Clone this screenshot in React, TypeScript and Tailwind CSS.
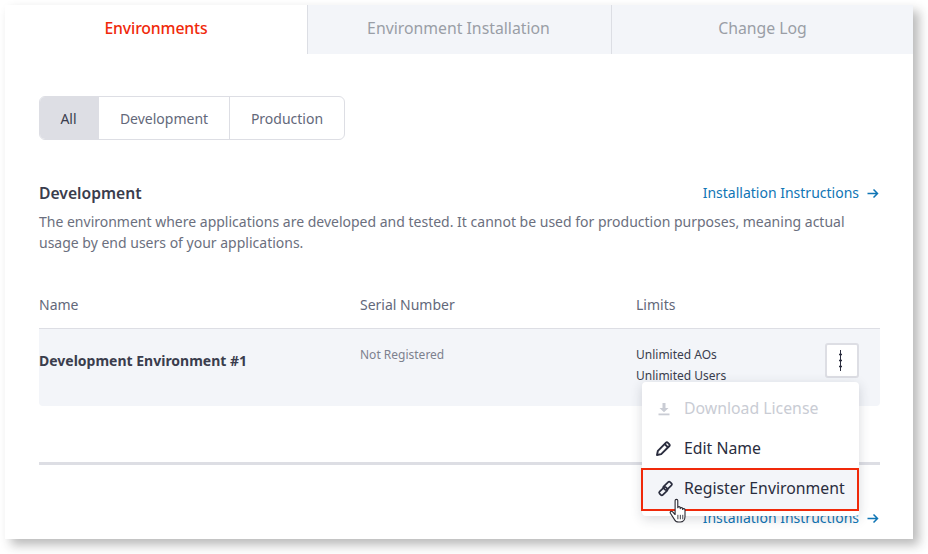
const font = { fontFamily: '"Noto Sans", sans-serif' };

function ArrowIcon() {
  return (
    <svg width="12" height="11" viewBox="0 0 12 11" fill="none" stroke="#0f75b5" strokeWidth="1.5">
      <path d="M0.5 5.5H10.5M6.5 1.5L10.5 5.5L6.5 9.5" />
    </svg>
  );
}

function InstallLink() {
  return (
    <a className="flex items-center gap-[8px] pr-px text-[14px] leading-[20px] text-[#0f75b5]">
      Installation Instructions
      <ArrowIcon />
    </a>
  );
}

function DownloadIcon() {
  return (
    <svg width="14" height="14" viewBox="0 0 14 14" fill="#c9ccd4" className="ml-[15px] mr-[13px]">
      <path d="M5.5 1h3v5h3L7 10.2 2.5 6h3z" />
      <rect x="1.5" y="11.5" width="11" height="1.8" />
    </svg>
  );
}

function EditIcon() {
  return (
    <svg width="17" height="17" viewBox="0 0 17 17" fill="none" stroke="#2a2d3e" strokeWidth="1.9" strokeLinejoin="round" className="ml-[13px] mr-[12px]">
      <path d="M2 15l.9-4.2L11 2.6a1.2 1.2 0 0 1 1.7 0l1.7 1.7a1.2 1.2 0 0 1 0 1.7L6.2 14.1z" />
      <path d="M9.6 4l3.4 3.4" />
    </svg>
  );
}

function ChainIcon() {
  return (
    <svg width="17" height="17" viewBox="0 0 17 17" fill="none" stroke="#2a2d3e" strokeWidth="1.7" className="ml-[14px] mr-[10px]">
      <rect x="6.1" y="3.6" width="9" height="4.6" rx="1.4" transform="rotate(-45 10.6 5.9)" />
      <rect x="1.9" y="8.8" width="9" height="4.6" rx="1.4" transform="rotate(-45 6.4 11.1)" />
    </svg>
  );
}

function HandCursor() {
  return (
    <svg width="20" height="27" viewBox="0 0 18 24" className="absolute left-[26px] top-[28px]">
      <path
        d="M5.5 2.2c0-1.5 2.4-1.5 2.4 0v6.4c0-1.3 2.2-1.3 2.2 0v.8c0-1.2 2.2-1.2 2.2 0v.8c0-1.1 2.1-1.1 2.1.2v6.2c0 2.6-1.6 4.9-4.2 4.9H8.6c-1.9 0-3-1-3.9-2.6L1.3 13.6c-.8-1.4.9-2.5 2-1.3l2.2 2.4z"
        fill="#fff"
        stroke="#2a2a33"
        strokeWidth="1"
        strokeLinejoin="round"
      />
      <path d="M8 15v4M10.2 15v4M12.4 15v4" stroke="#2a2a33" strokeWidth="0.8" />
    </svg>
  );
}

function RowMenu() {
  return (
    <div className="absolute left-[603px] top-[53px] h-[134px] w-[217px] rounded-[4px] bg-white pt-[7px] text-[15.8px] text-[#2a2d3e] shadow-[0_3px_12px_rgba(40,44,60,0.18)]">
      <div className="flex h-[40px] items-center text-[#c9ccd4]">
        <DownloadIcon />
        Download License
      </div>
      <div className="flex h-[39px] items-center">
        <EditIcon />
        Edit Name
      </div>
      <div className="relative -ml-px flex h-[43px] items-center border-2 border-[#f0290a] bg-[#f3f5f9] pb-[2px]">
        <ChainIcon />
        Register Environment
        <HandCursor />
      </div>
    </div>
  );
}

export default function App() {
  return (
    <div className="h-[554px] w-[928px] overflow-hidden bg-white pl-[5px] pt-[5px]" style={font}>
      <div className="h-[534px] w-[908px] bg-white shadow-[6px_6px_10px_rgba(40,40,40,0.32)]">
        {/* Tabs */}
        <div className="flex h-[49px] pb-[2px] text-[15.8px]">
          <div className="flex w-[302px] items-center justify-center font-medium text-[#f0290a]">
            <span className="tracking-[-0.15px]">Environments</span>
          </div>
          <div className="-mb-[2px] flex w-[304px] items-center justify-center border-l border-[#dcdee4] bg-[#f3f5f9] pb-[2px] pr-[2px] text-[#9a9ea6]">
            Environment Installation
          </div>
          <div className="-mb-[2px] flex flex-1 items-center justify-center border-l border-[#dcdee4] bg-[#f3f5f9] pb-[2px] text-[#9a9ea6]">
            Change Log
          </div>
        </div>

        <div className="pl-[34px] pr-[33px] pt-[42px]">
          {/* Filter */}
          <div className="flex h-[44px] w-[306px] overflow-hidden rounded-[6px] border border-[#dddee4] text-[14px] text-[#63687a]">
            <div className="flex w-[59px] items-center justify-center bg-[#dddee4] pr-[2px] text-[#3a3d4d]">All</div>
            <div className="flex w-[131px] items-center justify-center border-r border-[#dddee4]">Development</div>
            <div className="flex flex-1 items-center justify-center">Production</div>
          </div>

          {/* Section header */}
          <div className="mt-[42px] flex items-center justify-between">
            <h2 className="text-[15.7px] font-semibold leading-[22px] text-[#3a3d4d]">Development</h2>
            <InstallLink />
          </div>
          <p className="mt-[7px] w-[820px] text-[14px] leading-[21px] text-[#6b6f7e]">
            The environment where applications are developed and tested. It cannot be used for production purposes, meaning actual usage by end users of your applications.
          </p>

          {/* Table */}
          <div className="mt-[31px] flex h-[45px] items-center border-b border-[#dddee4] pb-[4px] text-[14px] text-[#63687a]">
            <div className="w-[321px]">Name</div>
            <div className="w-[276px]">Serial Number</div>
            <div>Limits</div>
          </div>
          <div className="relative flex h-[77px] rounded-b-[4px] bg-[#f3f5f9]">
            <div className="w-[321px] pt-[22px] text-[14px] font-bold leading-[20px] text-[#3a3d4d]">Development Environment #1</div>
            <div className="w-[276px] pt-[18px] text-[12px] leading-[16px] text-[#7d818e]">Not Registered</div>
            <div className="pt-[15px] text-[12px] leading-[21px] text-[#3a3d4d]">
              <div>Unlimited AOs</div>
              <div>Unlimited Users</div>
            </div>
            <button className="absolute left-[786px] top-[14px] flex h-[35px] w-[34px] items-center justify-center rounded-[3px] border-2 border-[#dddee4] bg-white pr-[3px]">
              <svg width="5" height="21" viewBox="0 0 5 21">
                <path d="M2.5 0v21" stroke="#2a2d3e" strokeWidth="1" />
                <path d="M1 4.5h3M1 10.5h3M1 16.5h3" stroke="#2a2d3e" strokeWidth="1.6" />
              </svg>
            </button>
          </div>

          {/* Next section */}
          <div className="relative">
            <div className="mt-[56px] h-[3px] bg-[#dddee4]" />
            <div className="mt-[43px] flex justify-end">
              <InstallLink />
            </div>
            <div className="absolute left-0 top-[-133px]">
              <RowMenu />
            </div>
          </div>
        </div>
      </div>
    </div>
  );
}
